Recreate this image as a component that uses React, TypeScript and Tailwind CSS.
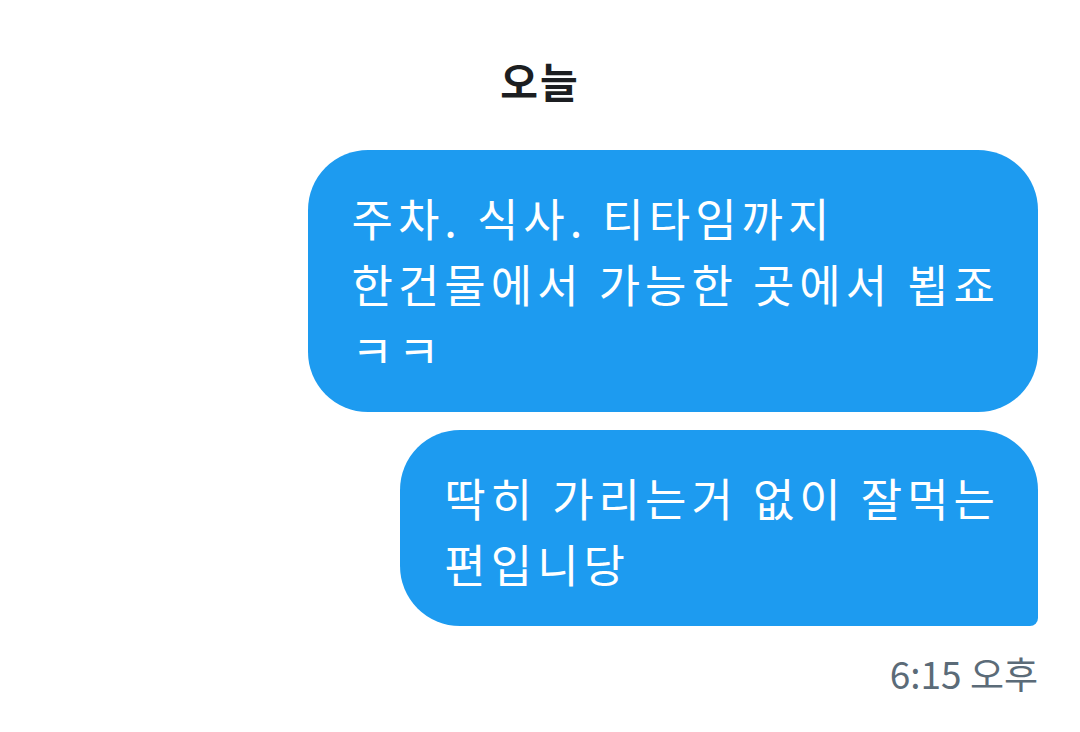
const font = { fontFamily: '"Noto Sans CJK KR", "Noto Sans", sans-serif' };

type Bubble = { id: string; lines: string[]; tail?: boolean };

const bubbles: Bubble[] = [
  { id: '1', lines: ['주차. 식사. 티타임까지', '한건물에서 가능한 곳에서 뵙죠', 'ㅋㅋ'] },
  { id: '2', lines: ['딱히 가리는거 없이 잘먹는', '편입니당'], tail: true },
];

export default function App() {
  return (
    <div className="w-[1080px] h-[732px] bg-white flex flex-col" style={font}>
      <div className="pt-[50px] h-[150px] flex justify-center">
        <h1 className="text-[41px] leading-[60px] font-bold text-[#1c1e21] tracking-[2px]">오늘</h1>
      </div>

      <div className="flex flex-col items-end gap-[18px] pr-[42px]">
        {bubbles.map((b) => (
          <div
            key={b.id}
            className={`bg-[#1d9bf0] text-white rounded-[60px] pl-[44px] pr-[38px] pt-[35px] pb-[29px] ${
              b.tail ? 'rounded-br-[8px]' : ''
            }`}
          >
            {b.lines.map((line, i) => (
              <p key={i} className="text-[45px] leading-[66px] tracking-[5px] whitespace-nowrap">
                {line}
              </p>
            ))}
          </div>
        ))}
        <p className="mt-[2px] text-[37px] leading-[54px] text-[#5b6b78]">6:15 오후</p>
      </div>
    </div>
  );
}
